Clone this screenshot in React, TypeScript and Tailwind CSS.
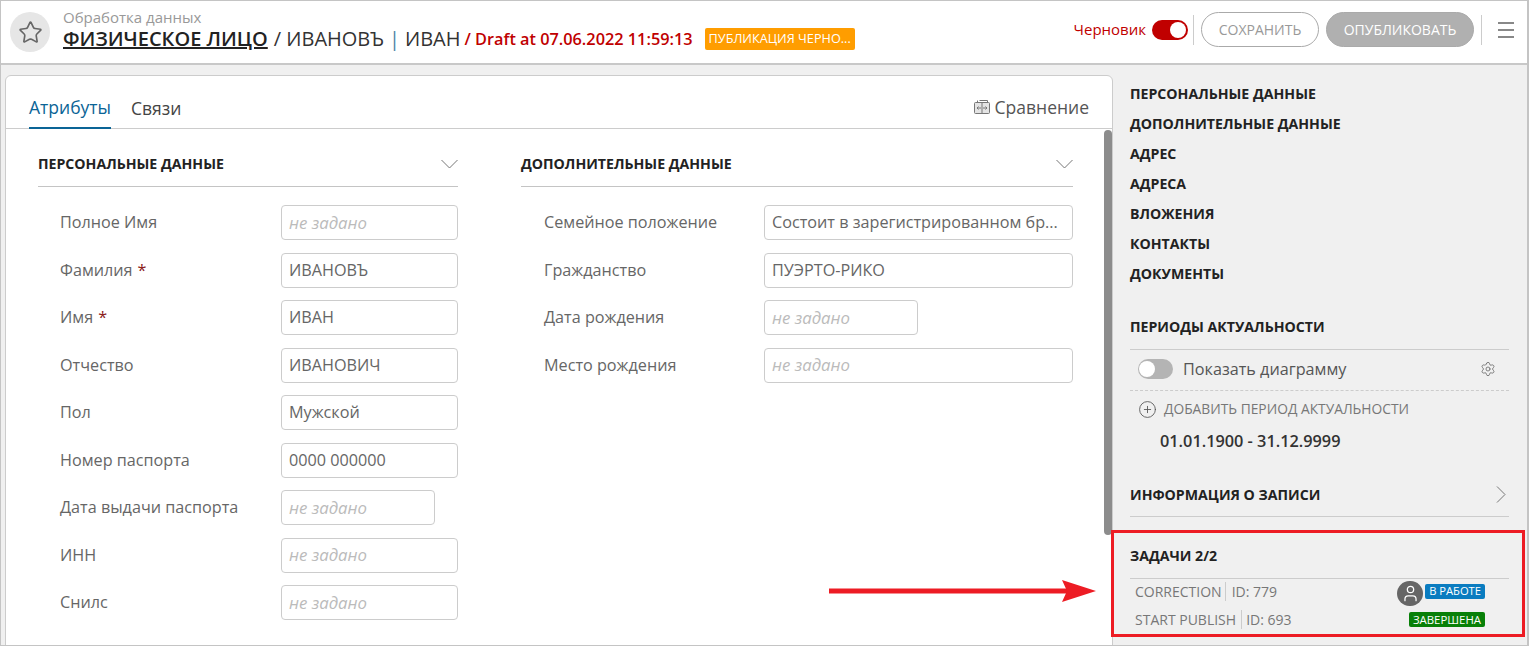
import { CirclePlus, Settings, Star, User } from "lucide-react";

const leftFields = [
  { label: "Полное Имя", value: "" },
  { label: "Фамилия", value: "ИВАНОВЪ", required: true },
  { label: "Имя", value: "ИВАН", required: true },
  { label: "Отчество", value: "ИВАНОВИЧ" },
  { label: "Пол", value: "Мужской" },
  { label: "Номер паспорта", value: "0000 000000" },
  { label: "Дата выдачи паспорта", value: "", short: true },
  { label: "ИНН", value: "" },
  { label: "Снилс", value: "" },
];

const rightFields = [
  { label: "Семейное положение", value: "Состоит в зарегистрированном бр..." },
  { label: "Гражданство", value: "ПУЭРТО-РИКО" },
  { label: "Дата рождения", value: "", short: true },
  { label: "Место рождения", value: "" },
];

const sections = [
  "ПЕРСОНАЛЬНЫЕ ДАННЫЕ",
  "ДОПОЛНИТЕЛЬНЫЕ ДАННЫЕ",
  "АДРЕС",
  "АДРЕСА",
  "ВЛОЖЕНИЯ",
  "КОНТАКТЫ",
  "ДОКУМЕНТЫ",
];

type Field = { label: string; value: string; required?: boolean; short?: boolean };

function FieldRow({ field, labelClass }: { field: Field; labelClass: string }) {
  return (
    <div className="flex items-center h-[35px]">
      <div className={`${labelClass} shrink-0 pb-[0.5px] text-[16.2px] text-[#666]`}>
        {field.label}
        {field.required && <span className="text-[#8b1a1a] ml-[5px]">*</span>}
      </div>
      <div
        className={`${field.short ? "w-[154px]" : "flex-1"} h-[35px] flex items-center px-[7px] border border-[#ccc] rounded-[4px] bg-white whitespace-nowrap overflow-hidden`}
      >
        {field.value ? (
          <span className="text-[16.2px] text-[#666]">{field.value}</span>
        ) : (
          <span className="text-[16.8px] italic text-[#bbb]">не задано</span>
        )}
      </div>
    </div>
  );
}

function FormColumn({
  title,
  fields,
  className,
  bodyClass,
  labelClass,
}: {
  title: string;
  fields: Field[];
  className: string;
  bodyClass: string;
  labelClass: string;
}) {
  return (
    <div className={className}>
      <div className="flex items-center justify-between h-[58px] pt-[12px] border-b border-[#c4c4c4]">
        <span className="text-[14.15px] font-bold text-[#222]">{title}</span>
        <svg width="17" height="10" viewBox="0 0 17 10" fill="none" stroke="#777" strokeWidth="1" className="mt-[1px]">
          <path d="M.5 1 8.5 9 16.5 1" />
        </svg>
      </div>
      <div className={`flex flex-col gap-[12.5px] pt-[18px] ${bodyClass}`}>
        {fields.map((f) => (
          <FieldRow key={f.label} field={f} labelClass={labelClass} />
        ))}
      </div>
    </div>
  );
}

export default function App() {
  return (
    <div className="relative w-[1529px] h-[646px] overflow-hidden bg-[#f0f0f0] border border-r-2 border-[#c4c4c4] font-['Open_Sans',sans-serif]">
      <header className="flex items-center h-[64px] bg-white border-b-2 border-[#c8c8c8] pl-[9px] pr-[13px]">
        <div className="w-[40px] h-[40px] rounded-full bg-[#e6e6e6] flex items-center justify-center shrink-0">
          <Star size={25} strokeWidth={1.6} className="text-[#666]" />
        </div>
        <div className="ml-[13px] -mt-[4px] flex flex-col">
          <div className="text-[15px] leading-[18px] text-[#999]">Обработка данных</div>
          <div className="flex items-center h-[27px] whitespace-nowrap text-[20px] text-[#333]">
            <span className="underline font-semibold text-[#222]">ФИЗИЧЕСКОЕ ЛИЦО</span>
            <span className="ml-[6px]">/ ИВАНОВЪ</span>
            <span className="mx-[5px] text-[#4a7fa5]">|</span>
            <span>ИВАН</span>
            <span className="ml-[4px] text-[16.3px] font-semibold text-[#c00000]">/ Draft at 07.06.2022 11:59:13</span>
            <span className="ml-[12px] h-[22px] px-[4px] flex items-center rounded-[2px] bg-[#ff9d00] text-white text-[12.7px]">
              ПУБЛИКАЦИЯ ЧЕРНО...
            </span>
          </div>
        </div>
        <div className="ml-auto -mt-[5px] flex items-center">
          <span className="text-[15px] text-[#c00000]">Черновик</span>
          <div className="ml-[6px] w-[36px] h-[20px] rounded-full bg-[#c00000] flex items-center justify-end pr-[2px]">
            <div className="w-[16px] h-[16px] rounded-full bg-white" />
          </div>
          <div className="ml-[5px] w-px h-[30px] bg-[#ccc]" />
          <div className="ml-[7px] w-[118px] h-[35px] rounded-full border border-[#aaa] flex items-center justify-center text-[14px] text-[#999]">
            СОХРАНИТЬ
          </div>
          <div className="ml-[7px] w-[148px] h-[35px] rounded-full bg-[#b0b0b0] border border-[#aaa] flex items-center justify-center text-[14px] text-white">
            ОПУБЛИКОВАТЬ
          </div>
          <div className="ml-[7px] w-px h-[30px] bg-[#ccc]" />
          <div className="ml-[16px] w-[16px] flex flex-col gap-[5px]">
            <div className="h-[2px] bg-[#888]" />
            <div className="h-[2px] bg-[#888]" />
            <div className="h-[2px] bg-[#888]" />
          </div>
        </div>
      </header>

      <div className="flex items-start pt-[10px] pl-[4px]">
        <main className="relative w-[1108px] h-[600px] shrink-0 bg-white border border-[#ccc] rounded-[6px]">
          <div className="flex items-end h-[53px] border-b border-[#ccc] pl-[23px] pr-[23px]">
            <div className="h-[53px] flex items-end pb-[7px] -mb-px border-b-2 border-[#0a6496] text-[17.5px] text-[#0a6496]">
              Атрибуты
            </div>
            <div className="ml-[20px] pb-[7px] text-[17.5px] text-[#444]">Связи</div>
            <div className="ml-auto pb-[8px] flex items-center text-[17.5px] text-[#555]">
              <svg width="16" height="14" viewBox="0 0 16 14" fill="none" stroke="#777" strokeWidth="1" className="mr-[5px]">
                <path d="M5.5 .5h8v2" />
                <path d="M3.5 .5v2" />
                <rect x=".5" y="2.5" width="15" height="11" rx="1" fill="#e4e4e4" />
                <path d="M3 8h4M4.5 6.5 3 8l1.5 1.5M9 8h4M11.5 6.5 13 8l-1.5 1.5M8 3v10" />
              </svg>
              Сравнение
            </div>
          </div>
          <div className="flex">
            <FormColumn
              title="ПЕРСОНАЛЬНЫЕ ДАННЫЕ"
              fields={leftFields}
              className="ml-[32px] w-[420px]"
              bodyClass="pl-[22px]"
              labelClass="w-[221px]"
            />
            <FormColumn
              title="ДОПОЛНИТЕЛЬНЫЕ ДАННЫЕ"
              fields={rightFields}
              className="ml-[63px] w-[552px]"
              bodyClass="pl-[23px]"
              labelClass="w-[220px]"
            />
          </div>
          <div className="absolute left-[1098px] top-[54px] w-[8px] h-[405px] rounded-[4px] bg-[#8c8c8c]" />
        </main>

        <aside className="flex-1 ml-[17px] mr-[18px] flex flex-col">
          <div className="flex flex-col pt-[4px]">
            {sections.map((s) => (
              <div key={s} className="h-[30px] flex items-center text-[14.15px] font-bold text-[#222]">
                {s}
              </div>
            ))}
          </div>

          <div className="mt-[23px] h-[30px] flex items-center border-b border-[#ccc] pb-[7px] box-content text-[14.15px] font-bold text-[#222]">
            ПЕРИОДЫ АКТУАЛЬНОСТИ
          </div>
          <div className="h-[41px] flex items-center pl-[8px] pr-[13px] pb-[2px] border-b border-dashed border-[#ccc]">
            <div className="w-[35px] h-[20px] rounded-full bg-[#b4b4b4] flex items-center pl-[1px]">
              <div className="w-[16px] h-[16px] rounded-full bg-white" />
            </div>
            <span className="ml-[10px] text-[16.2px] text-[#555]">Показать диаграмму</span>
            <Settings size={16} strokeWidth={1.2} className="ml-auto text-[#666]" />
          </div>
          <div className="mt-[8px] flex items-center pl-[8px] text-[13.8px] text-[#777]">
            <CirclePlus size={19} strokeWidth={1.1} className="text-[#555]" />
            <span className="ml-[7px]">ДОБАВИТЬ ПЕРИОД АКТУАЛЬНОСТИ</span>
          </div>
          <div className="mt-[9px] pl-[30px] text-[16.3px] font-semibold text-[#333]">01.01.1900 - 31.12.9999</div>

          <div className="mt-[20px] h-[44px] flex items-center justify-between border-b border-[#ccc] text-[14.15px] font-bold text-[#222]">
            ИНФОРМАЦИЯ О ЗАПИСИ
            <svg width="10" height="17" viewBox="0 0 10 17" fill="none" stroke="#777" strokeWidth="1" className="mr-[3px]">
              <path d="M1 .5 9 8.5 1 16.5" />
            </svg>
          </div>

          <div className="mt-[20px] h-[36px] flex items-center border-b border-[#ccc] pb-[5px] box-content text-[14.15px] font-bold text-[#222]">
            ЗАДАЧИ 2/2
          </div>
          <div className="h-[29px] flex items-center pl-[5px] pr-[24px] pb-[4px] text-[14px] text-[#777]">
            <span>CORRECTION</span>
            <span className="ml-[3px] mr-[6px] h-[19px] w-px bg-[#ccc]" />
            <span>ID: 779</span>
            <div className="ml-auto mt-[3px] w-[26px] h-[25px] rounded-full bg-[#666] flex items-center justify-center">
              <User size={19} strokeWidth={1.6} className="text-white" />
            </div>
            <span className="ml-[2px] h-[15px] px-[4px] flex items-center rounded-[2px] bg-[#0a7cc0] text-white text-[11.2px]">
              В РАБОТЕ
            </span>
          </div>
          <div className="h-[27px] flex items-center pl-[5px] pr-[24px] pb-[4px] text-[14px] text-[#777]">
            <span>START PUBLISH</span>
            <span className="ml-[5px] mr-[4px] h-[19px] w-px bg-[#ccc]" />
            <span>ID: 693</span>
            <span className="ml-auto h-[15px] px-[4px] flex items-center rounded-[2px] bg-[#088008] text-white text-[11.4px]">
              ЗАВЕРШЕНА
            </span>
          </div>
        </aside>
      </div>

      {/* annotation over the screenshot */}
      <div className="absolute left-[1110px] top-[529px] w-[414px] h-[107px] border-[3px] border-[#ed1c24]" />
      <svg className="absolute left-[828px] top-[578px]" width="270" height="24" viewBox="0 0 270 24">
        <path d="M0 9.5h240v5H0z" fill="#ed1c24" />
        <path d="M233 1 267 12 233 23 238 12z" fill="#ed1c24" />
      </svg>
    </div>
  );
}
